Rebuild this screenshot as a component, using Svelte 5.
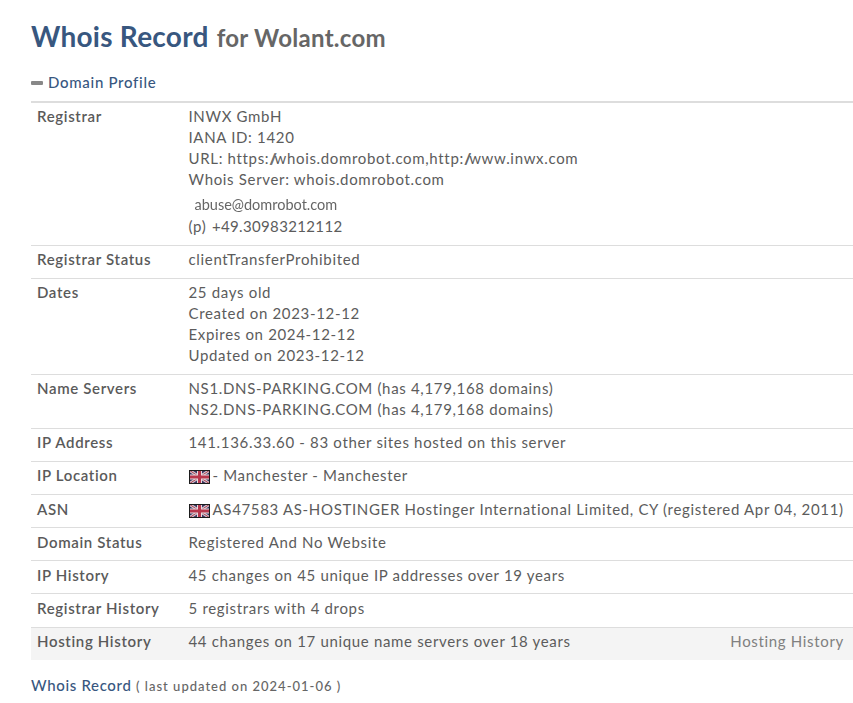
<script>
  const rows = [
    { label: "Registrar Status", lines: ["clientTransferProhibited"] },
    { label: "Dates", lines: ["25 days old", "Created on 2023-12-12", "Expires on 2024-12-12", "Updated on 2023-12-12"] },
    { label: "Name Servers", lines: ["NS1.DNS-PARKING.COM (has 4,179,168 domains)", "NS2.DNS-PARKING.COM (has 4,179,168 domains)"] },
    { label: "IP Address", lines: ["141.136.33.60 - 83 other sites hosted on this server"] },
    { label: "IP Location", flag: true, lines: ["- Manchester - Manchester"] },
    { label: "ASN", flag: true, lines: ["AS47583 AS-HOSTINGER Hostinger International Limited, CY (registered Apr 04, 2011)"] },
    { label: "Domain Status", lines: ["Registered And No Website"] },
    { label: "IP History", lines: ["45 changes on 45 unique IP addresses over 19 years"] },
    { label: "Registrar History", lines: ["5 registrars with 4 drops"] },
  ];
</script>

{#snippet flag()}
  <svg class="flag" viewBox="0 0 21 14" width="21" height="14" aria-hidden="true">
    <rect width="21" height="14" fill="#3a3560" />
    <path d="M0 0L21 14M21 0L0 14" stroke="#d8c8d0" stroke-width="3" />
    <path d="M0 0L21 14M21 0L0 14" stroke="#a83c50" stroke-width="1" />
    <path d="M10.5 0V14M0 7H21" stroke="#e6dce0" stroke-width="5" />
    <path d="M10.5 0V14M0 7H21" stroke="#b8364c" stroke-width="3" />
    <rect x="0.5" y="0.5" width="20" height="13" fill="none" stroke="#1c1c1c" />
  </svg>
{/snippet}

<main class="page">
  <h1><span class="title">Whois Record</span> <small>for Wolant.com</small></h1>

  <h2 class="section"><span class="dash"></span>Domain Profile</h2>

  <div class="table">
    <div class="row">
      <div class="label">Registrar</div>
      <div class="value">
        <div>INWX GmbH</div>
        <div>IANA ID: 1420</div>
        <div>URL: https:<span class="slashes">//</span>whois.domrobot.com,http:<span class="slashes">//</span>www.inwx.com</div>
        <div>Whois Server: whois.domrobot.com</div>
        <div class="email">abuse@domrobot.com</div>
        <div>(p) <span class="phone">+49.30983212112</span></div>
      </div>
    </div>

    {#each rows as row}
      <div class="row">
        <div class="label">{row.label}</div>
        <div class="value">
          {#each row.lines as line}
            <div>{#if row.flag}{@render flag()}{/if}{line}</div>
          {/each}
        </div>
      </div>
    {/each}

    <div class="row last">
      <div class="label">Hosting History</div>
      <div class="value">44 changes on 17 unique name servers over 18 years</div>
      <div class="link">Hosting History</div>
    </div>
  </div>

  <p class="updated"><span class="name">Whois Record</span> <span class="date">( last updated on 2024-01-06 )</span></p>
</main>

<style>
  :global(body) {
    background: #fff;
  }

  .page {
    padding: 18px 0 0 31px;
    font-family: Lato, "Liberation Sans", sans-serif;
    font-size: 15px;
    line-height: 21px;
    letter-spacing: 0.67px;
    color: #5c5c5c;
  }

  h1 {
    margin: 0;
    font-size: 28px;
    line-height: 36px;
    font-weight: 700;
    letter-spacing: 0.25px;
    color: #38577f;
  }

  h1 small {
    margin-left: 1px;
    font-size: 24px;
    letter-spacing: 0.3px;
    color: #666;
  }

  .section {
    display: flex;
    align-items: center;
    margin: 16px 0 0;
    height: 21px;
    font-size: 15px;
    font-weight: 500;
    letter-spacing: 0.7px;
    color: #38577f;
  }

  .dash {
    width: 12px;
    height: 4px;
    margin-right: 5px;
    border-radius: 1px;
    background: #888;
  }

  .table {
    margin-top: 8.04px;
    border-top: 2px solid #ddd;
  }

  .row {
    display: flex;
    padding: 3.22px 9px 7.83px 6px;
    border-bottom: 1px solid #ddd;
  }

  .label {
    flex: 0 0 151.5px;
    font-weight: 600;
    letter-spacing: 0.65px;
    color: #5a5a5a;
  }

  .value {
    flex: 1;
    white-space: nowrap;
  }

  .email {
    margin: 4px 0 1px 6px;
    font-size: 14.5px;
    letter-spacing: 0;
    color: #666;
    filter: blur(0.3px);
  }

  .phone {
    margin-left: 1px;
    letter-spacing: 0.35px;
  }

  .slashes {
    letter-spacing: -2.5px;
  }

  .flag {
    margin-right: 3px;
    vertical-align: -3px;
  }

  .last {
    border-bottom: 0;
    background: #f4f4f4;
  }

  .link {
    color: #808080;
  }

  .updated {
    margin: 15px 0 0;
  }

  .name {
    font-weight: 500;
    color: #38577f;
  }

  .date {
    font-size: 13px;
    font-weight: 500;
    letter-spacing: 1px;
    color: #666;
  }
</style>
